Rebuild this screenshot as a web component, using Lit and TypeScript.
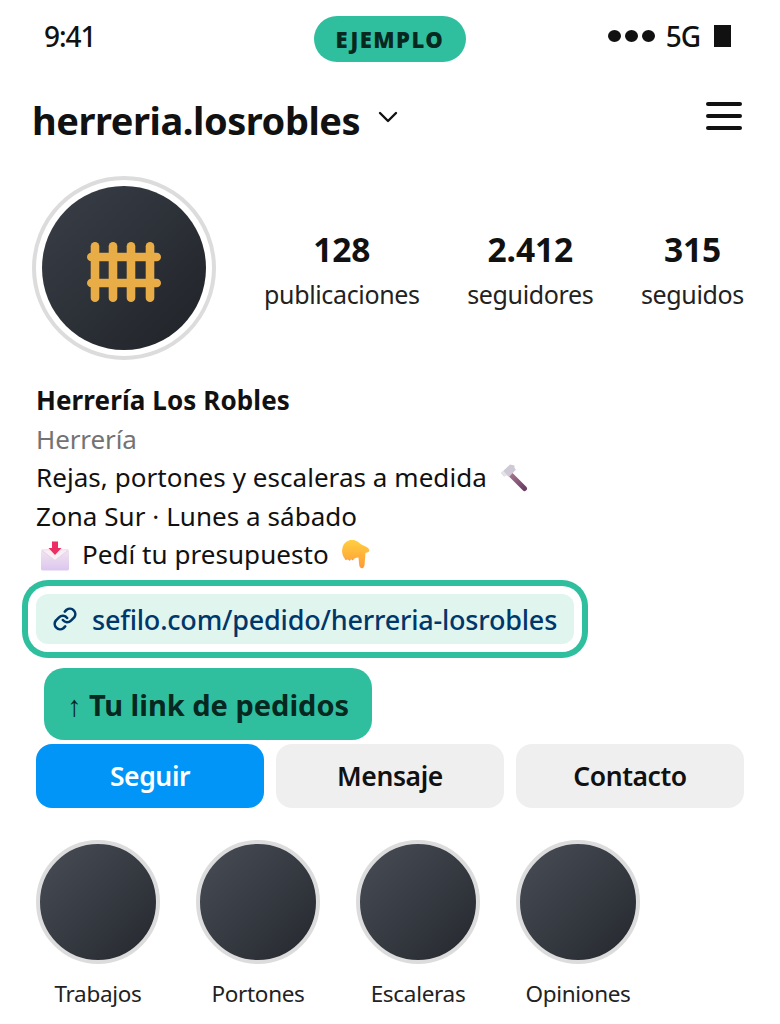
import { LitElement, html, css, svg } from "lit";
import { customElement } from "lit/decorators.js";

const hammer = html`<svg class="emo" width="30" height="30" viewBox="0 0 30 30" aria-hidden="true">
  <defs><linearGradient id="hg" x1="0" y1="0" x2="1" y2="1"><stop offset="0" stop-color="#a8788f"/><stop offset="1" stop-color="#6d3f66"/></linearGradient></defs>
  <path d="M12 11 L26.5 25.5" stroke="url(#hg)" stroke-width="5" stroke-linecap="round"/>
  <path d="M3 10 L12 1.5 L16.5 2.5 L16.5 5 L18 6.5 L11 14 L9 12 L6 13.5 Z" fill="#cfc9d6"/>
  <path d="M3 10 L6 13.5 L9 12 L5.5 8 Z" fill="#e6e2ea"/>
</svg>`;

const envelope = html`<svg class="emo" width="30" height="30" viewBox="0 0 30 30" aria-hidden="true">
  <defs><linearGradient id="eg" x1="0" y1="0" x2="0" y2="1"><stop offset="0" stop-color="#f3e6ee"/><stop offset="1" stop-color="#dcc6ee"/></linearGradient></defs>
  <path d="M1 10 Q1 8 3 8 L27 8 Q29 8 29 10 L29 28 Q29 29.5 27 29.5 L3 29.5 Q1 29.5 1 28 Z" fill="url(#eg)"/>
  <path d="M2 9.5 L15 19.5 L28 9.5" fill="#f8eff5" stroke="#e5d3e6" stroke-width="1"/>
  <path d="M12 0.5 L18 0.5 L18 7 L21.5 7 L15 14 L8.5 7 L12 7 Z" fill="#ee2d63"/>
</svg>`;

const hand = html`<svg class="emo" width="30" height="30" viewBox="0 0 30 30" aria-hidden="true">
  <defs><linearGradient id="ph" x1="0" y1="0" x2="0" y2="1"><stop offset="0" stop-color="#ffcf40"/><stop offset="1" stop-color="#ff9a36"/></linearGradient></defs>
  <path d="M1 12 Q1.5 3 9 1 L13 1 Q17 2 19.5 5 L26.5 8.5 Q29.5 11 27.5 13 L24.5 14 L23.5 26.5 Q22.5 30 20 29 Q18.5 28.5 18.2 26 L17.5 18.5 Q15 18.5 13.5 19.5 L12 21 L10 20.5 L8.5 21.5 L6.5 20.5 L4.5 20.5 Q1.5 18 1 12 Z" fill="url(#ph)"/>
  <path d="M4.4 20.4 L5.6 20.4 M8 21 L9.2 21 M11.2 20.6 L12.2 20.6" stroke="#f2879a" stroke-width="1.2"/>
</svg>`;

@customElement("app-root")
export class AppRoot extends LitElement {
  static styles = css`
    :host { display: block; width: 780px; height: 1024px; overflow: hidden; background: #fff; color: #111;
      font-family: "Noto Sans", "Open Sans", sans-serif; }
    * { box-sizing: border-box; }
    .status { display: grid; grid-template-columns: 1fr auto 1fr; align-items: center; height: 46px; margin-top: 16px; padding: 0 44px; }
    .time { font-size: 28px; font-weight: 500; letter-spacing: -1.05px; line-height: 40px; margin-top: -6px; }
    .pill { width: 152px; height: 46px; border-radius: 23px; background: #2fbf9f; color: #06281f; display: flex; align-items: center; justify-content: center;
      font-size: 22px; font-weight: 900; letter-spacing: 1.5px; }
    .sys { justify-self: end; display: flex; align-items: center; font-size: 28px; font-weight: 500; letter-spacing: -1.05px; line-height: 40px; margin: -6px 5px 0 0; }
    .dots { display: flex; gap: 4px; margin-right: 11px; }
    .dots i { width: 13px; height: 12px; border-radius: 50%; background: #111; }
    .batt { width: 17px; height: 22px; background: #111; margin-left: 14px; }
    .head { display: flex; align-items: center; height: 58px; margin-top: 29px; padding: 0 38px 0 32px; }
    .user { font-size: 38px; font-weight: 700; letter-spacing: -0.45px; line-height: 58px; margin-top: -1px; }
    .chev { margin-left: 18px; margin-top: -7px; }
    .burger { margin-left: auto; margin-top: -8px; }
    .profile { display: flex; align-items: center; margin-top: 27px; padding: 0 36px 0 32px; }
    .ring { width: 184px; height: 184px; border-radius: 50%; border: 4px solid #dcdcdc; padding: 6px; flex: none; }
    .avatar { width: 100%; height: 100%; border-radius: 50%; background: linear-gradient(135deg, #3a3f48, #1f2227); display: flex; align-items: center; justify-content: center; }
    .fence { margin-top: 8px; }
    .stats { flex: 1; display: flex; justify-content: space-between; padding-left: 48px; margin-top: 8px; }
    .stat { display: flex; flex-direction: column; align-items: center; }
    .num { font-size: 33.5px; font-weight: 700; line-height: 44px; letter-spacing: -0.1px; }
    .lab { font-size: 25px; line-height: 46px; color: #222; letter-spacing: -0.35px; }
    .bio { padding: 0 36px; margin-top: 21px; font-size: 26px; line-height: 38.5px; letter-spacing: 0.05px; color: #111; }
    .name { font-weight: 700; letter-spacing: 0.1px; }
    .cat { color: #737373; letter-spacing: -0.1px; }
    .line { display: flex; align-items: center; height: 38.5px; white-space: nowrap; }
    .emo { flex: none; display: block; }
    .gap-h { margin: 2px 0 0 11px; }
    .env { margin: 4px 0 0 4px; }
    .pedi { margin: 0 12px 0 12px; }
    .linkrow { display: flex; margin: 20px 0 0 36px; }
    .link { width: 538px; height: 50px; border-radius: 12px; background: #e1f5ef; box-shadow: 0 0 0 8px #fff, 0 0 0 14px #2fbf9f; display: flex; align-items: center; padding: 1px 0 0 16px; gap: 14px;
      color: #00376b; font-size: 27px; font-weight: 500; letter-spacing: -0.2px; white-space: nowrap; }
    .tag { display: inline-flex; align-items: center; justify-content: center; width: 328px; height: 72px; margin: 24px 0 0 44px; padding-top: 2px; border-radius: 20px; background: #2fbf9f; color: #06281f; font-size: 29px; font-weight: 700; white-space: nowrap; }
    .btns { display: grid; grid-template-columns: repeat(3, 228px); gap: 12px; padding-left: 36px; margin-top: 4px; }
    .btn { height: 64px; border-radius: 16px; background: #efefef; display: flex; align-items: center; justify-content: center; font-size: 26.5px; font-weight: 600; letter-spacing: -0.4px; color: #111; }
    .btn.pri { background: #0095f6; color: #fff; }
    .hl { display: flex; gap: 36px; padding-left: 36px; margin-top: 32px; }
    .item { width: 124px; display: flex; flex-direction: column; align-items: center; }
    .circ { width: 124px; height: 124px; border-radius: 50%; border: 4px solid #dcdcdc; background: linear-gradient(135deg, #4a4f58, #23262c); background-origin: border-box; }
    .ilab { margin-top: 14px; font-size: 22.5px; line-height: 32px; letter-spacing: -0.3px; color: #222; white-space: nowrap; }
  `;

  render() {
    const stats = [["128", "publicaciones"], ["2.412", "seguidores"], ["315", "seguidos"]];
    const hls = ["Trabajos", "Portones", "Escaleras", "Opiniones"];
    return html`
      <div class="status">
        <div class="time">9:41</div>
        <div class="pill">EJEMPLO</div>
        <div class="sys"><span class="dots"><i></i><i></i><i></i></span>5G<span class="batt"></span></div>
      </div>
      <div class="head">
        <div class="user">herreria.losrobles</div>
        <svg class="chev" width="20" height="12" viewBox="0 0 20 12" aria-hidden="true"><path d="M2 2 L10 10 L18 2" fill="none" stroke="#111" stroke-width="2.4" stroke-linecap="round" stroke-linejoin="round"/></svg>
        <svg class="burger" width="36" height="30" viewBox="0 0 36 30" aria-hidden="true"><g stroke="#111" stroke-width="4" stroke-linecap="round"><path d="M2 3 H34"/><path d="M2 15 H34"/><path d="M2 27 H34"/></g></svg>
      </div>
      <div class="profile">
        <div class="ring"><div class="avatar">
          <svg class="fence" width="74" height="60" viewBox="0 0 74 60" aria-hidden="true"><g stroke="#e8ad46" stroke-width="8.6" stroke-linecap="round" fill="none">
            ${[8, 26, 44, 63].map((x) => svg`<path d="M${x} 4.3 V55.7"/>`)}
            <path d="M4.3 15 H69.7"/><path d="M4.3 41 H69.7"/>
          </g></svg>
        </div></div>
        <div class="stats">
          ${stats.map(([n, l]) => html`<div class="stat"><span class="num">${n}</span><span class="lab">${l}</span></div>`)}
        </div>
      </div>
      <div class="bio">
        <div class="line name">Herrería Los Robles</div>
        <div class="line cat">Herrería</div>
        <div class="line">Rejas, portones y escaleras a medida<span class="gap-h">${hammer}</span></div>
        <div class="line">Zona Sur · Lunes a sábado</div>
        <div class="line"><span class="env">${envelope}</span><span class="pedi">Pedí tu presupuesto</span>${hand}</div>
      </div>
      <div class="linkrow"><div class="link">
        <svg width="26" height="26" viewBox="0 0 24 24" fill="none" stroke="#00376b" stroke-width="2.4" stroke-linecap="round" stroke-linejoin="round" aria-hidden="true"><path d="M10 13a5 5 0 0 0 7.5.5l3-3a5 5 0 0 0-7-7l-1.7 1.7"/><path d="M14 11a5 5 0 0 0-7.5-.5l-3 3a5 5 0 0 0 7 7l1.7-1.7"/></svg>
        <span>sefilo.com/pedido/herreria-losrobles</span>
      </div></div>
      <div class="tag">↑ Tu link de pedidos</div>
      <div class="btns">
        <div class="btn pri">Seguir</div><div class="btn">Mensaje</div><div class="btn">Contacto</div>
      </div>
      <div class="hl">
        ${hls.map((h) => html`<div class="item"><div class="circ"></div><div class="ilab">${h}</div></div>`)}
      </div>
    `;
  }
}
